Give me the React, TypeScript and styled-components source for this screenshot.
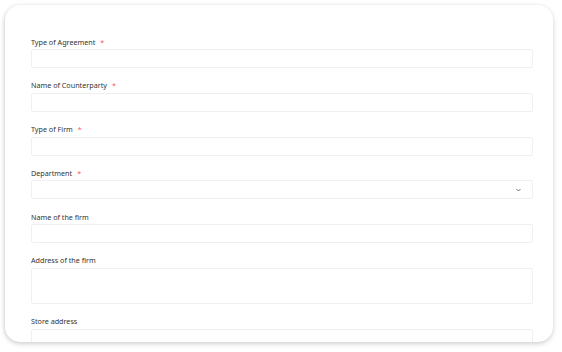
import React from "react";
import styled, { createGlobalStyle } from "styled-components";

const Global = createGlobalStyle`
  html, body { margin: 0; padding: 0; background: #ffffff; }
  body { font-family: "Noto Sans", "Open Sans", sans-serif; }
  * { box-sizing: border-box; }
`;

const Page = styled.div`
  padding: 5px 9px 10px 5px;
`;

const Card = styled.div`
  height: 337px;
  overflow: hidden;
  background: #ffffff;
  border-radius: 15px;
  box-shadow: 0 2px 5px rgba(40, 40, 60, 0.2), -1px 0 3px rgba(120, 120, 170, 0.12);
  padding: 31px 20px 0 26px;
`;

const Field = styled.div`
  display: flex;
  flex-direction: column;
  margin-bottom: 11.8px;
`;

const Label = styled.label`
  height: 13px;
  display: flex;
  align-items: flex-start;
  padding-top: 0.5px;
  font-family: "Noto Sans", sans-serif;
  font-size: 7.2px;
  line-height: 10px;
  color: #333333;
`;

const Star = styled.span`
  color: #ff5a5c;
  margin-left: 5px;
`;

const Box = styled.div<{ $tall?: boolean }>`
  position: relative;
  height: ${(p) => (p.$tall ? "36px" : "19px")};
  border: 1px solid #f0f0f0;
  border-radius: 2px;
  background: #ffffff;
`;

const Chevron = styled.svg`
  position: absolute;
  right: 11px;
  top: 7px;
  width: 5px;
  height: 4px;
`;

type F = { label: string; required?: boolean; select?: boolean; tall?: boolean };

const fields: F[] = [
  { label: "Type of Agreement", required: true },
  { label: "Name of Counterparty", required: true },
  { label: "Type of Firm", required: true },
  { label: "Department", required: true, select: true },
  { label: "Name of the firm" },
  { label: "Address of the firm", tall: true },
  { label: "Store address" },
];

export default function App() {
  return (
    <>
      <Global />
      <Page>
        <Card>
          {fields.map((f) => (
            <Field key={f.label}>
              <Label>
                {f.label}
                {f.required && <Star>*</Star>}
              </Label>
              <Box $tall={f.tall}>
                {f.select && (
                  <Chevron viewBox="0 0 5 4">
                    <polyline points="0.5,1 2.5,3 4.5,1" fill="none" stroke="#6f6f80" strokeWidth="1" />
                  </Chevron>
                )}
              </Box>
            </Field>
          ))}
        </Card>
      </Page>
    </>
  );
}
